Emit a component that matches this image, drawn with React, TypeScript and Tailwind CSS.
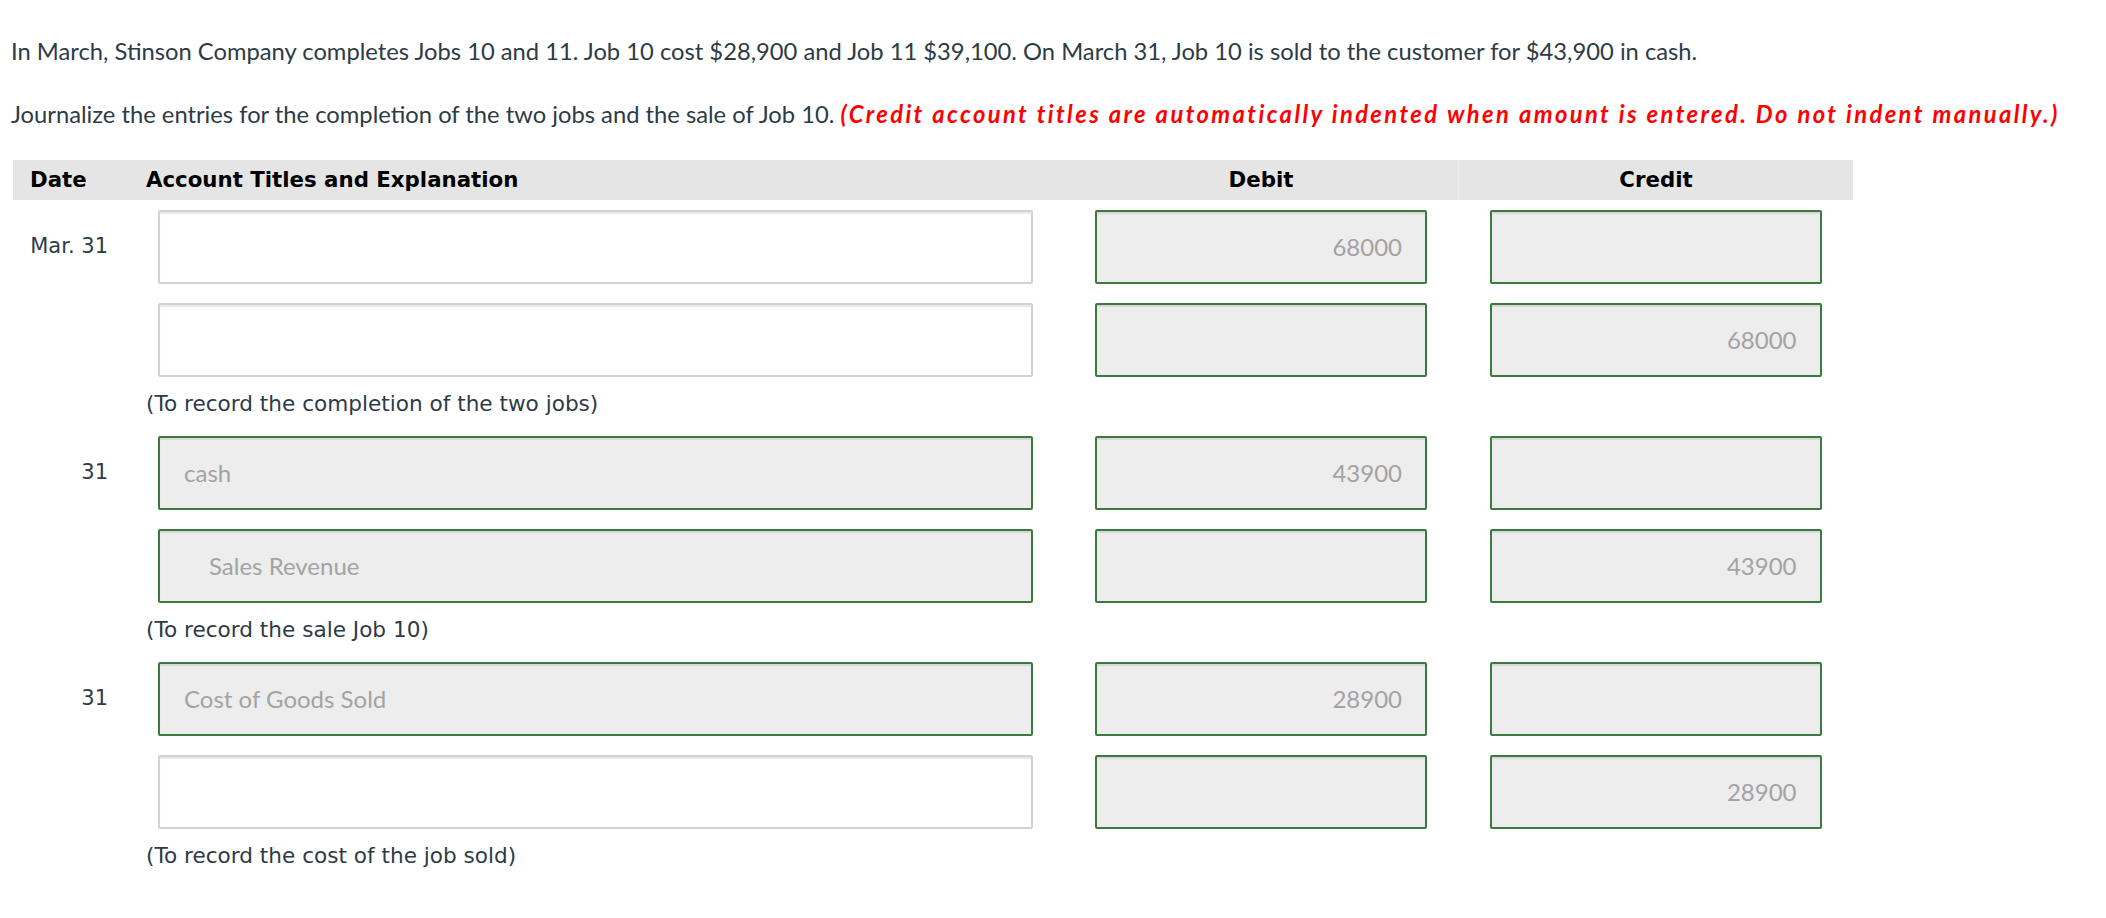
import * as React from "react";

type Line = {
  account?: string;
  indent?: boolean;
  debit?: string;
  credit?: string;
  filled?: boolean;
};

type Entry = {
  date: string;
  lines: Line[];
  note: string;
};

const ENTRIES: Entry[] = [
  {
    date: "Mar. 31",
    lines: [{ debit: "68000" }, { credit: "68000" }],
    note: "(To record the completion of the two jobs)",
  },
  {
    date: "31",
    lines: [
      { account: "cash", filled: true, debit: "43900" },
      { account: "Sales Revenue", indent: true, filled: true, credit: "43900" },
    ],
    note: "(To record the sale Job 10)",
  },
  {
    date: "31",
    lines: [
      { account: "Cost of Goods Sold", filled: true, debit: "28900" },
      { credit: "28900" },
    ],
    note: "(To record the cost of the job sold)",
  },
];

const COLS = "grid grid-cols-[122px_929px_394px_395px]";

const Field = ({
  value,
  filled,
  right,
  indent,
  className,
}: {
  value?: string;
  filled?: boolean;
  right?: boolean;
  indent?: boolean;
  className?: string;
}) => (
  <div
    className={
      "flex h-[74px] items-center rounded-[2px] border-2 font-['Lato',sans-serif] text-[24px] text-[#a3a3a3] shadow-[inset_0_2px_1px_rgba(0,0,0,0.09)] " +
      (filled ? "border-[#3a7a3f] bg-[#ededed] " : "border-[#d2d2d2] bg-white ") +
      (right ? "justify-end pr-[23px] " : indent ? "pl-[49px] " : "pl-[24px] ") +
      (className ?? "")
    }
  >
    {value}
  </div>
);

export default function App() {
  return (
    <div className="min-h-screen bg-white pl-[11px] pt-[36px] text-[#2d3b45]">
      <p className="font-['Lato',sans-serif] text-[23.75px] leading-[30px]">
        In March, Stinson Company completes Jobs 10 and 11. Job 10 cost $28,900 and Job 11 $39,100. On
        March 31, Job 10 is sold to the customer for $43,900 in cash.
      </p>
      <p className="mt-[33px] font-['Lato',sans-serif] text-[23.75px] leading-[30px]">
        Journalize the entries for the completion of the two jobs and the sale of Job 10.{" "}
        <span className="font-bold italic tracking-[2.4px] text-[#ff0000]">
          (Credit account titles are automatically indented when amount is entered. Do not indent
          manually.)
        </span>
      </p>

      <div className="ml-[2px] mt-[31px] w-[1840px]">
        <div
          className={
            COLS +
            " h-[40px] items-center bg-[#e5e5e5] font-['DejaVu_Sans',Verdana,sans-serif] text-[21.3px] font-bold text-black"
          }
        >
          <div className="pl-[17px]">Date</div>
          <div className="pl-[11px]">Account Titles and Explanation</div>
          <div className="text-center">Debit</div>
          <div className="flex h-full items-center justify-center border-l border-[#efefef]">
            Credit
          </div>
        </div>

        <div className="pt-[10px]">
          {ENTRIES.map((entry, i) => (
            <div key={i}>
              {entry.lines.map((line, j) => (
                <div key={j} className={COLS + (j > 0 ? " mt-[19px]" : "") + " items-center"}>
                  <div className="pr-[27px] text-right font-['DejaVu_Sans',Verdana,sans-serif] text-[21px]">
                    {j === 0 ? entry.date : ""}
                  </div>
                  <div className="pl-[23px] pr-[31px]">
                    <Field value={line.account} filled={line.filled} indent={line.indent} />
                  </div>
                  <div className="flex justify-center">
                    <Field value={line.debit} filled right className="w-[332px]" />
                  </div>
                  <div className="flex justify-center">
                    <Field value={line.credit} filled right className="w-[332px]" />
                  </div>
                </div>
              ))}
              <div className="pb-[19px] pl-[133px] pt-[13px] font-['DejaVu_Sans',Verdana,sans-serif] text-[21.6px] leading-[27px]">
                {entry.note}
              </div>
            </div>
          ))}
        </div>
      </div>
    </div>
  );
}
